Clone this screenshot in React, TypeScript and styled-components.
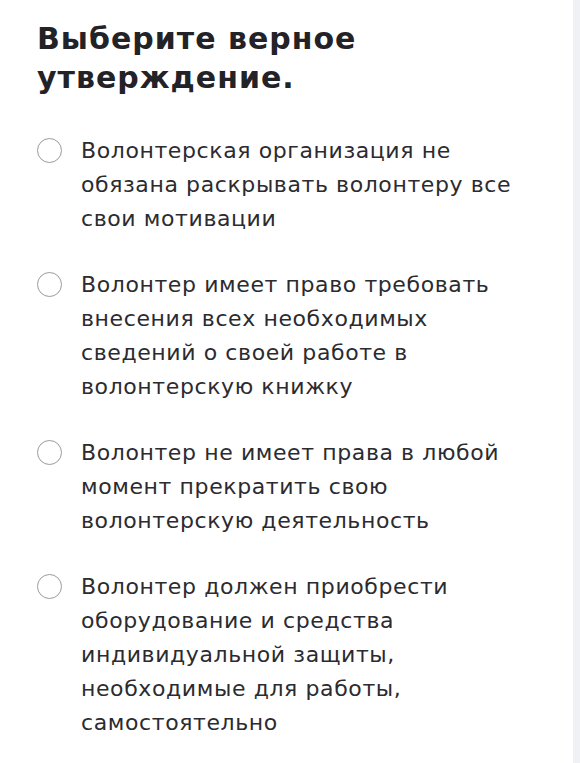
import React from "react";
import styled, { createGlobalStyle } from "styled-components";

const Global = createGlobalStyle`
  html, body { margin: 0; padding: 0; background: #ffffff; }
  body { font-family: "DejaVu Sans", "Noto Sans", sans-serif; }
`;

const Page = styled.div`
  display: flex;
  min-height: 763px;
  width: 580px;
`;

const Main = styled.main`
  flex: 1;
  padding: 19px 0 0 37px;
  background: #ffffff;
`;

const Scroll = styled.div`
  width: 7px;
  background: #eff1f4;
`;

const Title = styled.h1`
  margin: 0 0 37px;
  font-family: "DejaVu Sans", sans-serif;
  font-weight: 700;
  font-size: 30px;
  line-height: 39px;
  letter-spacing: 1px;
  color: #222227;
`;

const Options = styled.div`
  display: flex;
  flex-direction: column;
  gap: 32px;
`;

const Option = styled.label`
  display: flex;
  align-items: flex-start;
  gap: 19px;
  cursor: pointer;
`;

const Radio = styled.span`
  flex: none;
  width: 25px;
  height: 25px;
  margin-top: 4px;
  border: 1.5px solid #9b9b9f;
  border-radius: 50%;
  box-sizing: border-box;
`;

const Text = styled.div`
  font-size: 22px;
  line-height: 34px;
  letter-spacing: 0.6px;
  color: #2b2b30;
`;

const Line = styled.span`
  display: block;
  white-space: nowrap;
`;

const items: string[][] = [
  ["Волонтерская организация не", "обязана раскрывать волонтеру все", "свои мотивации"],
  ["Волонтер имеет право требовать", "внесения всех необходимых", "сведений о своей работе в", "волонтерскую книжку"],
  ["Волонтер не имеет права в любой", "момент прекратить свою", "волонтерскую деятельность"],
  ["Волонтер должен приобрести", "оборудование и средства", "индивидуальной защиты,", "необходимые для работы,", "самостоятельно"],
];

export default function App() {
  return (
    <>
      <Global />
      <Page>
        <Main>
          <Title>
            Выберите верное
            <br />
            утверждение.
          </Title>
          <Options>
            {items.map((lines, i) => (
              <Option key={i}>
                <Radio />
                <Text>
                  {lines.map((l, j) => (
                    <Line key={j}>{l}</Line>
                  ))}
                </Text>
              </Option>
            ))}
          </Options>
        </Main>
        <Scroll />
      </Page>
    </>
  );
}
